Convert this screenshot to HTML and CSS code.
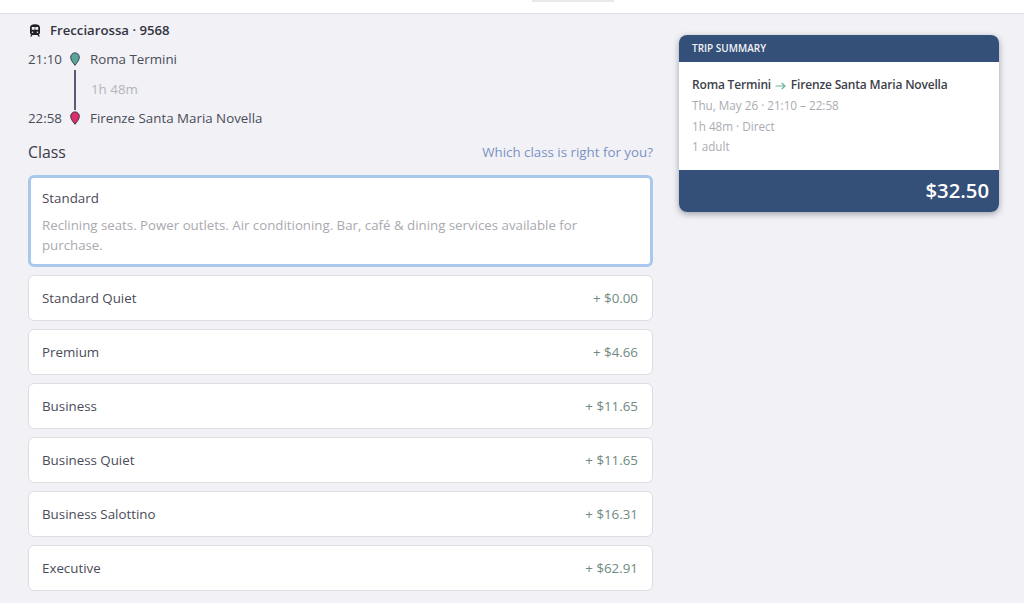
FILE: index.html
```html
<!DOCTYPE html>
<html lang="en">
<head>
<meta charset="utf-8">
<title>Class selection</title>
<link rel="stylesheet" href="styles.css">
</head>
<body>
<header class="topbar"><div class="topbar-tab"></div></header>
<main class="page">
  <section class="left">
    <div class="train">
      <svg class="train-icon" viewBox="0 0 12 13" width="12" height="13"><path fill="#1f2027" d="M6 .3c3 0 5 1.200 5 3.300v5.100c0 .9-.5 1.500-1.300 1.700l1.300 2.100H9.500L8.500 11h-5l-1 1.500H1l1.300-2.100C1.500 10.200 1 9.600 1 8.700V3.600C1 1.500 3 .3 6 .3z"/><path fill="#f1f1f6" d="M2.800 3h2.900v2.800H2.800zM6.300 3h2.900v2.800H6.300z"/><circle cx="3.500" cy="8.300" r=".8" fill="#f1f1f6"/><circle cx="8.500" cy="8.300" r=".8" fill="#f1f1f6"/></svg>
      <span>Frecciarossa · 9568</span>
    </div>
    <div class="itinerary">
      <div class="stop">
        <span class="time">21:10</span>
        <svg class="pin" viewBox="0 0 12 14" width="12" height="14"><path class="pin-green" d="M6 13.300C4.200 10.800 1.700 8.300 1.700 5.200A4.300 4.300 0 0 1 10.300 5.200C10.300 8.300 7.800 10.800 6 13.300z"/></svg>
        <span>Roma Termini</span>
      </div>
      <div class="leg">
        <i class="leg-line"></i>
        <span class="duration">1h 48m</span>
      </div>
      <div class="stop">
        <span class="time">22:58</span>
        <svg class="pin" viewBox="0 0 12 14" width="12" height="14"><path class="pin-red" d="M6 13.300C4.200 10.800 1.700 8.300 1.700 5.200A4.300 4.300 0 0 1 10.300 5.200C10.300 8.300 7.800 10.800 6 13.300z"/></svg>
        <span>Firenze Santa Maria Novella</span>
      </div>
    </div>
    <div class="class-head">
      <h2>Class</h2>
      <a class="help" href="#">Which class is right for you?</a>
    </div>
    <div class="options">
      <div class="option selected">
        <div class="option-name">Standard</div>
        <p class="option-desc">Reclining seats. Power outlets. Air conditioning. Bar, café &amp; dining services available for purchase.</p>
      </div>
      <div class="option"><span>Standard Quiet</span><span class="price">+ $0.00</span></div>
      <div class="option"><span>Premium</span><span class="price">+ $4.66</span></div>
      <div class="option"><span>Business</span><span class="price">+ $11.65</span></div>
      <div class="option"><span>Business Quiet</span><span class="price">+ $11.65</span></div>
      <div class="option"><span>Business Salottino</span><span class="price">+ $16.31</span></div>
      <div class="option"><span>Executive</span><span class="price">+ $62.91</span></div>
    </div>
  </section>
  <aside class="summary">
    <div class="summary-head">TRIP SUMMARY</div>
    <div class="summary-body">
      <div class="route">Roma Termini <svg class="arrow" viewBox="0 0 11 8" width="11" height="8"><path d="M.5 4h9.500M6.800 1l3.200 3-3.200 3"/></svg> Firenze Santa Maria Novella</div>
      <div class="meta">Thu, May 26 · 21:10 – 22:58</div>
      <div class="meta">1h 48m · Direct</div>
      <div class="meta">1 adult</div>
    </div>
    <div class="summary-total">$32.50</div>
  </aside>
</main>
</body>
</html>
```
FILE: styles.css
```css
* { box-sizing: border-box; }
html, body { margin: 0; padding: 0; }
body {
  height: 603px;
  overflow: hidden;
  background: #f1f1f6;
  color: #4a4c58;
  font-family: "Open Sans", "Liberation Sans", sans-serif;
  font-size: 13.33px;
}
.topbar {
  height: 14px;
  background: #fff;
  border-bottom: 1px solid #dfdfe2;
  padding-left: 532px;
}
.topbar-tab { width: 82px; height: 2px; background: #e9e9ec; }
.page { display: flex; align-items: flex-start; padding: 0 25px 0 28px; gap: 26px; }
.left { width: 625px; flex: none; }
.train {
  display: flex;
  align-items: center;
  gap: 9px;
  height: 18px;
  margin-top: 7px;
  padding-left: 1px;
  font-size: 13.2px;
  font-weight: 600;
  color: #33353f;
}
.train-icon { flex: none; }
.itinerary { margin-top: 11px; }
.stop { display: flex; align-items: center; height: 18px; }
.time { width: 35px; }
.pin { flex: none; margin: 0 9px 0 6px; }
.pin-green { fill: #5aa49a; stroke: #33414a; stroke-width: 1; }
.pin-red { fill: #dc2e68; stroke: #3b3048; stroke-width: 1; }
.leg { display: flex; align-items: center; height: 41px; }
.leg-line { flex: none; width: 2px; height: 40px; background: #5b5a70; margin: 2px 0 0 46px; }
.duration { color: #b5b5bb; margin-left: 15px; }
.class-head {
  display: flex;
  justify-content: space-between;
  align-items: center;
  margin-top: 14px;
  height: 22px;
}
.class-head h2 { margin: 0; font-size: 15.8px; font-weight: 400; color: #3a3c47; }
.help { color: #7b93c4; text-decoration: none; }
.options { margin-top: 12px; display: flex; flex-direction: column; gap: 8px; }
.option {
  height: 46px;
  background: #fff;
  border: 1px solid #dddde2;
  border-radius: 6px;
  padding: 0 14px 0 13px;
  display: flex;
  justify-content: space-between;
  align-items: center;
}
.option.selected {
  display: block;
  height: 92px;
  border: 3px solid #a9c8ee;
  padding: 11px 11px 0;
}
.option-name { height: 18px; line-height: 18px; }
.option-desc { margin: 8px 0 0; line-height: 20px; font-size: 13.28px; color: #a9a9b0; }
.price { color: #6f8a80; }
.summary {
  width: 320px;
  flex: none;
  margin-top: 21px;
  border-radius: 8px;
  overflow: hidden;
  background: #fff;
  box-shadow: 0 2px 6px rgba(60, 60, 80, .45);
}
.summary-head {
  height: 27px;
  line-height: 27px;
  padding-left: 13px;
  background: #355078;
  color: #f0f2f6;
  font-size: 10px;
  font-weight: 600;
}
.summary-body { height: 108px; padding: 13px 13px 0; }
.route { height: 20px; line-height: 20px; font-size: 12px; font-weight: 600; color: #3d3f4a; letter-spacing: -.015em; }
.arrow { fill: none; stroke: #6fb39e; stroke-width: 1.2; vertical-align: -1px; margin: 0 2px 0 1px; }
.meta { height: 20.5px; line-height: 20.5px; font-size: 11.7px; color: #abacb2; }
.summary-total {
  height: 42px;
  line-height: 41px;
  background: #355078;
  color: #fff;
  font-size: 20.3px;
  font-weight: 600;
  text-align: right;
  padding-right: 10px;
}
```
